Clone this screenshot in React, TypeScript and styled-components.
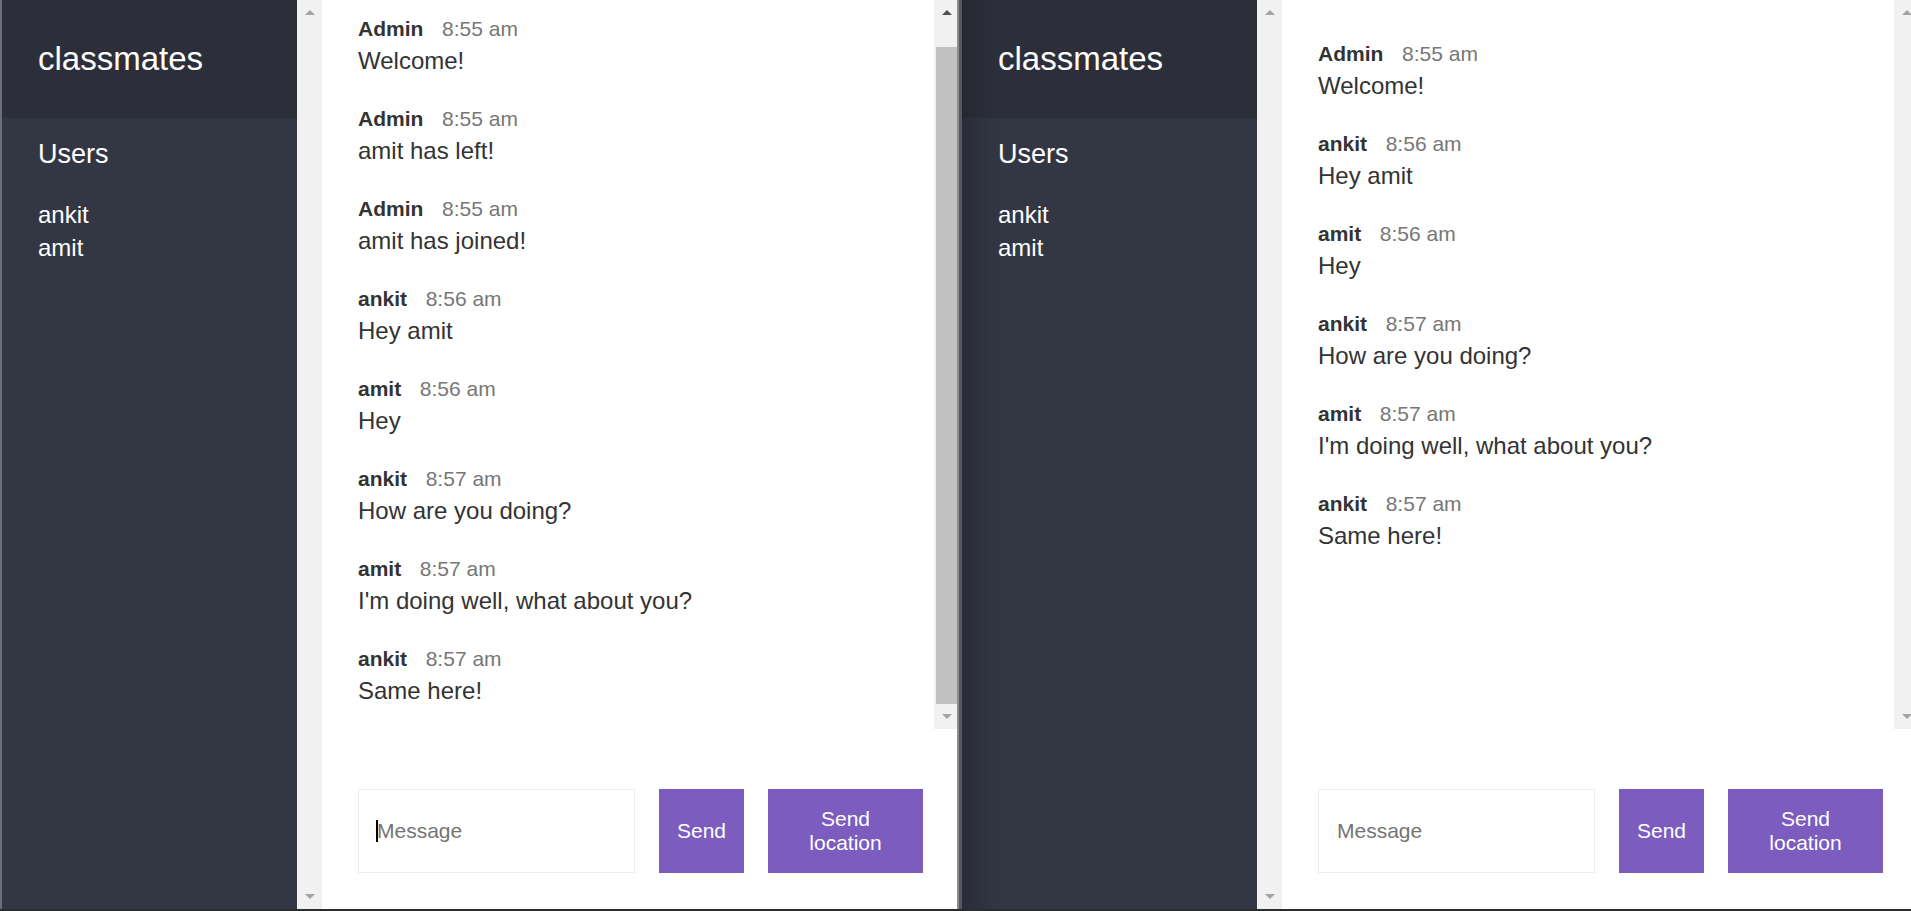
import React from "react";
import styled, { createGlobalStyle } from "styled-components";

const GlobalStyle = createGlobalStyle`
  * {
    margin: 0;
    padding: 0;
    box-sizing: border-box;
  }
  html, body {
    background: #1f2129;
    overflow: hidden;
  }
  body {
    font-family: "Liberation Sans", Arial, sans-serif;
    font-size: 24px;
    line-height: 33px;
    color: #333333;
  }
`;

interface Msg {
  name: string;
  time: string;
  text: string;
}

const Screen = styled.div`
  display: flex;
  width: 1911px;
  height: 911px;
  overflow: hidden;
  border-bottom: 2px solid #2b2c30;
`;

const Window = styled.div<{ $edge?: boolean }>`
  display: flex;
  flex: 0 0 957px;
  height: 100%;
  overflow: hidden;
  border-left: ${(p) => (p.$edge ? "2px solid #6b6e78" : "none")};
`;

const Divider = styled.div`
  flex: 0 0 5px;
  background: linear-gradient(90deg, #8c8c8c 0 2px, #55585f 2px);
`;

const Sidebar = styled.div`
  flex: 0 0 320px;
  display: flex;
  height: 100%;
`;

const SidebarInner = styled.div<{ $shade?: boolean }>`
  flex: 1;
  display: flex;
  flex-direction: column;
  color: #ffffff;
  background: ${(p) =>
    p.$shade
      ? "linear-gradient(90deg, #2a2d37, #333744 40px)"
      : "#333744"};
`;

const RoomTitle = styled.h2<{ $shade?: boolean }>`
  font-weight: 400;
  font-size: 33px;
  line-height: 1.4;
  padding: 36px;
  background: ${(p) =>
    p.$shade
      ? "linear-gradient(90deg, #252831, #2c2f3a 36px)"
      : "#2c2f3a"};
`;

const ListTitle = styled.h3`
  font-weight: 500;
  font-size: 27px;
  line-height: 1.4;
  margin-bottom: 6px;
  padding: 18px 36px 0 36px;
`;

const UserList = styled.ul`
  list-style-type: none;
  font-weight: 300;
  padding: 18px 36px 0 36px;
`;

const Main = styled.div`
  flex: 0 0 637px;
  display: flex;
  flex-direction: column;
  height: 100%;
  background: #ffffff;
`;

const MessagesRow = styled.div`
  flex: 1;
  display: flex;
  min-height: 0;
`;

const Messages = styled.div`
  flex: 1;
  overflow: hidden;
  padding: 36px 36px 0 36px;
`;

const MessageList = styled.div<{ $offset: number }>`
  margin-top: ${(p) => -p.$offset}px;
`;

const Message = styled.div`
  margin-bottom: 24px;
`;

const MessageName = styled.span`
  font-weight: 600;
  font-size: 21px;
  line-height: 1;
  margin-right: 12px;
`;

const MessageTime = styled.span`
  color: #777777;
  font-size: 21px;
  line-height: 1;
`;

const ScrollBar = styled.div`
  flex: 0 0 25px;
  display: flex;
  flex-direction: column;
  background: #f1f1f1;
`;

const ArrowButton = styled.div`
  flex: 0 0 25px;
  display: flex;
  align-items: center;
  justify-content: center;
`;

const Arrow = styled.div<{ $down?: boolean; $active?: boolean }>`
  width: 0;
  height: 0;
  border-left: 5px solid transparent;
  border-right: 5px solid transparent;
  ${(p) =>
    p.$down
      ? `border-top: 5px solid ${p.$active ? "#505050" : "#a3a3a3"};`
      : `border-bottom: 5px solid ${p.$active ? "#505050" : "#a3a3a3"};`}
`;

const Track = styled.div`
  flex: 1;
  padding: 0 2px;
`;

const Thumb = styled.div<{ $top: number; $size: number }>`
  margin-top: ${(p) => p.$top}px;
  height: ${(p) => p.$size}px;
  background: #c1c1c1;
`;

const Compose = styled.div`
  display: flex;
  flex-shrink: 0;
  margin-top: 24px;
  padding: 36px;
`;

const Form = styled.form`
  display: flex;
  flex: 1;
  margin-right: 24px;
`;

const InputWrap = styled.div`
  position: relative;
  display: flex;
  flex: 1;
  margin-right: 24px;
`;

const Input = styled.input`
  width: 100%;
  border: 1px solid #eeeeee;
  padding: 18px;
  outline: none;
  font-family: "Liberation Sans", Arial, sans-serif;
  font-size: 21px;
  color: #333333;
  &::placeholder {
    color: #757575;
  }
`;

const Caret = styled.span`
  position: absolute;
  left: 18px;
  top: 31px;
  width: 2px;
  height: 22px;
  background: #000000;
`;

const Button = styled.button<{ $wide?: boolean }>`
  cursor: pointer;
  padding: 18px;
  background: #7c5cbf;
  border: none;
  color: #ffffff;
  font-family: "Liberation Sans", Arial, sans-serif;
  font-size: 21px;
  line-height: normal;
  flex-shrink: 0;
  ${(p) => (p.$wide ? "width: 155px;" : "")}
`;

interface ScrollProps {
  thumb?: { top: number; size: number };
  upActive?: boolean;
}

const Scroll = ({ thumb, upActive }: ScrollProps) => (
  <ScrollBar>
    <ArrowButton>
      <Arrow $active={upActive} />
    </ArrowButton>
    <Track>{thumb && <Thumb $top={thumb.top} $size={thumb.size} />}</Track>
    <ArrowButton>
      <Arrow $down />
    </ArrowButton>
  </ScrollBar>
);

interface ChatProps {
  messages: Msg[];
  offset: number;
  shade?: boolean;
  edge?: boolean;
  focused?: boolean;
  thumb?: { top: number; size: number };
}

const ChatWindow = ({ messages, offset, shade, edge, focused, thumb }: ChatProps) => (
  <Window $edge={edge}>
    <Sidebar>
      <SidebarInner $shade={shade}>
        <RoomTitle $shade={shade}>classmates</RoomTitle>
        <ListTitle>Users</ListTitle>
        <UserList>
          <li>ankit</li>
          <li>amit</li>
        </UserList>
      </SidebarInner>
      <Scroll />
    </Sidebar>
    <Main>
      <MessagesRow>
        <Messages>
          <MessageList $offset={offset}>
            {messages.map((m, i) => (
              <Message key={i}>
                <p>
                  <MessageName>{m.name}</MessageName>{" "}
                  <MessageTime>{m.time}</MessageTime>
                </p>
                <p>{m.text}</p>
              </Message>
            ))}
          </MessageList>
        </Messages>
        <Scroll thumb={thumb} upActive={!!thumb} />
      </MessagesRow>
      <Compose>
        <Form onSubmit={(e) => e.preventDefault()}>
          <InputWrap>
            <Input placeholder="Message" />
            {focused && <Caret />}
          </InputWrap>
          <Button type="button">Send</Button>
        </Form>
        <Button type="button" $wide>
          Send location
        </Button>
      </Compose>
    </Main>
  </Window>
);

const leftMessages: Msg[] = [
  { name: "Admin", time: "8:55 am", text: "Welcome!" },
  { name: "Admin", time: "8:55 am", text: "amit has left!" },
  { name: "Admin", time: "8:55 am", text: "amit has joined!" },
  { name: "ankit", time: "8:56 am", text: "Hey amit" },
  { name: "amit", time: "8:56 am", text: "Hey" },
  { name: "ankit", time: "8:57 am", text: "How are you doing?" },
  { name: "amit", time: "8:57 am", text: "I'm doing well, what about you?" },
  { name: "ankit", time: "8:57 am", text: "Same here!" },
];

const rightMessages: Msg[] = [
  { name: "Admin", time: "8:55 am", text: "Welcome!" },
  { name: "ankit", time: "8:56 am", text: "Hey amit" },
  { name: "amit", time: "8:56 am", text: "Hey" },
  { name: "ankit", time: "8:57 am", text: "How are you doing?" },
  { name: "amit", time: "8:57 am", text: "I'm doing well, what about you?" },
  { name: "ankit", time: "8:57 am", text: "Same here!" },
];

const App = () => (
  <>
    <GlobalStyle />
    <Screen>
      <ChatWindow
        messages={leftMessages}
        offset={25}
        edge
        focused
        thumb={{ top: 22, size: 657 }}
      />
      <Divider />
      <ChatWindow messages={rightMessages} offset={0} shade />
    </Screen>
  </>
);

export default App;
